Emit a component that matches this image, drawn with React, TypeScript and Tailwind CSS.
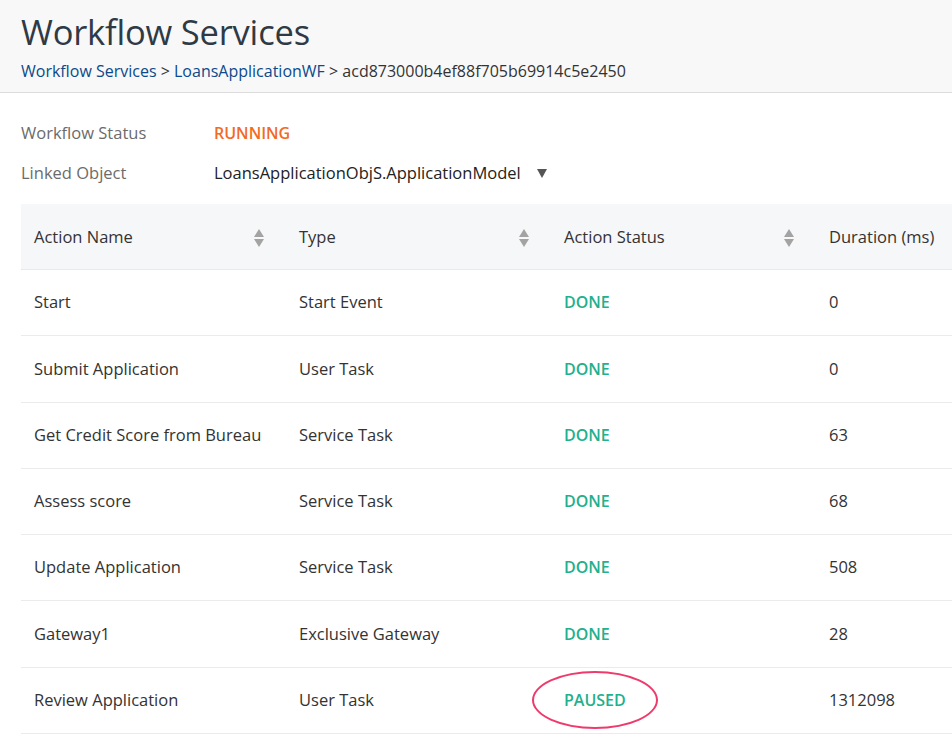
const rows = [
  { name: "Start", type: "Start Event", status: "DONE", duration: "0" },
  { name: "Submit Application", type: "User Task", status: "DONE", duration: "0" },
  { name: "Get Credit Score from Bureau", type: "Service Task", status: "DONE", duration: "63" },
  { name: "Assess score", type: "Service Task", status: "DONE", duration: "68" },
  { name: "Update Application", type: "Service Task", status: "DONE", duration: "508" },
  { name: "Gateway1", type: "Exclusive Gateway", status: "DONE", duration: "28" },
  { name: "Review Application", type: "User Task", status: "PAUSED", duration: "1312098" },
];

const SortIcon = () => (
  <svg width="10" height="18" viewBox="0 0 10 18" className="shrink-0">
    <path d="M5 0 L10 8 L0 8 Z" fill="#a3a3a3" />
    <path d="M0 10 L10 10 L5 18 Z" fill="#a3a3a3" />
  </svg>
);

const headers = ["Action Name", "Type", "Action Status", "Duration (ms)"];

export default function App() {
  return (
    <div className="w-[952px] h-[742px] overflow-hidden bg-white text-[#333] font-['Open_Sans',sans-serif]">
      <div className="bg-[#f8f8f8] border-b border-[#dcdcdc] px-[21px] pt-[9px] h-[93px]">
        <h1 className="text-[34.5px] leading-[46px] text-[#2f3a45] tracking-[-0.2px]">Workflow Services</h1>
        <div className="text-[16px] leading-[24px] mt-[4px]">
          <span className="text-[#0b4a8b]">Workflow Services</span>
          <span className="text-[#333]"> &gt; </span>
          <span className="text-[#0b4a8b]">LoansApplicationWF</span>
          <span className="text-[#333]"> &gt; acd873000b4ef88f705b69914c5e2450</span>
        </div>
      </div>

      <div className="px-[21px] pt-[28px]">
        <div className="grid grid-cols-[193px_1fr] gap-y-[16px] text-[16.5px] leading-[24px]">
          <div className="text-[#6b6b6b]">Workflow Status</div>
          <div className="text-[#f36a21] font-semibold text-[16px]">RUNNING</div>
          <div className="text-[#6b6b6b]">Linked Object</div>
          <div className="flex items-center gap-[16px] text-[#222]">
            <span>LoansApplicationObjS.ApplicationModel</span>
            <svg width="10" height="9" viewBox="0 0 10 9"><path d="M0 0 L10 0 L5 9 Z" fill="#555" /></svg>
          </div>
        </div>

        <div className="mt-[19px] w-[1060px] text-[16.5px]">
          <div className="flex h-[66px] bg-[#f6f7f9] border-b border-[#e8e9ec]">
            {headers.map((h) => (
              <div key={h} className="w-[265px] flex items-center justify-between pl-[13px] pr-[22px] pt-[2px] text-[#333]">
                <span>{h}</span>
                {h !== "Duration (ms)" && <SortIcon />}
              </div>
            ))}
          </div>
          {rows.map((r) => (
            <div key={r.name} className="flex h-[66.3px] border-b border-[#ebebeb] items-center">
              <div className="w-[265px] pl-[13px]">{r.name}</div>
              <div className="w-[265px] pl-[13px]">{r.type}</div>
              <div className="w-[265px] pl-[13px]">
                <span className="relative inline-block text-[#22b08d] font-semibold text-[16px]">
                  {r.status}
                  {r.status === "PAUSED" && (
                    <span className="absolute left-1/2 top-1/2 -translate-x-1/2 -translate-y-1/2 w-[126px] h-[58px] rounded-[50%] border-2 border-[#ef3a6c]" />
                  )}
                </span>
              </div>
              <div className="w-[265px] pl-[13px]">{r.duration}</div>
            </div>
          ))}
        </div>
      </div>
    </div>
  );
}
